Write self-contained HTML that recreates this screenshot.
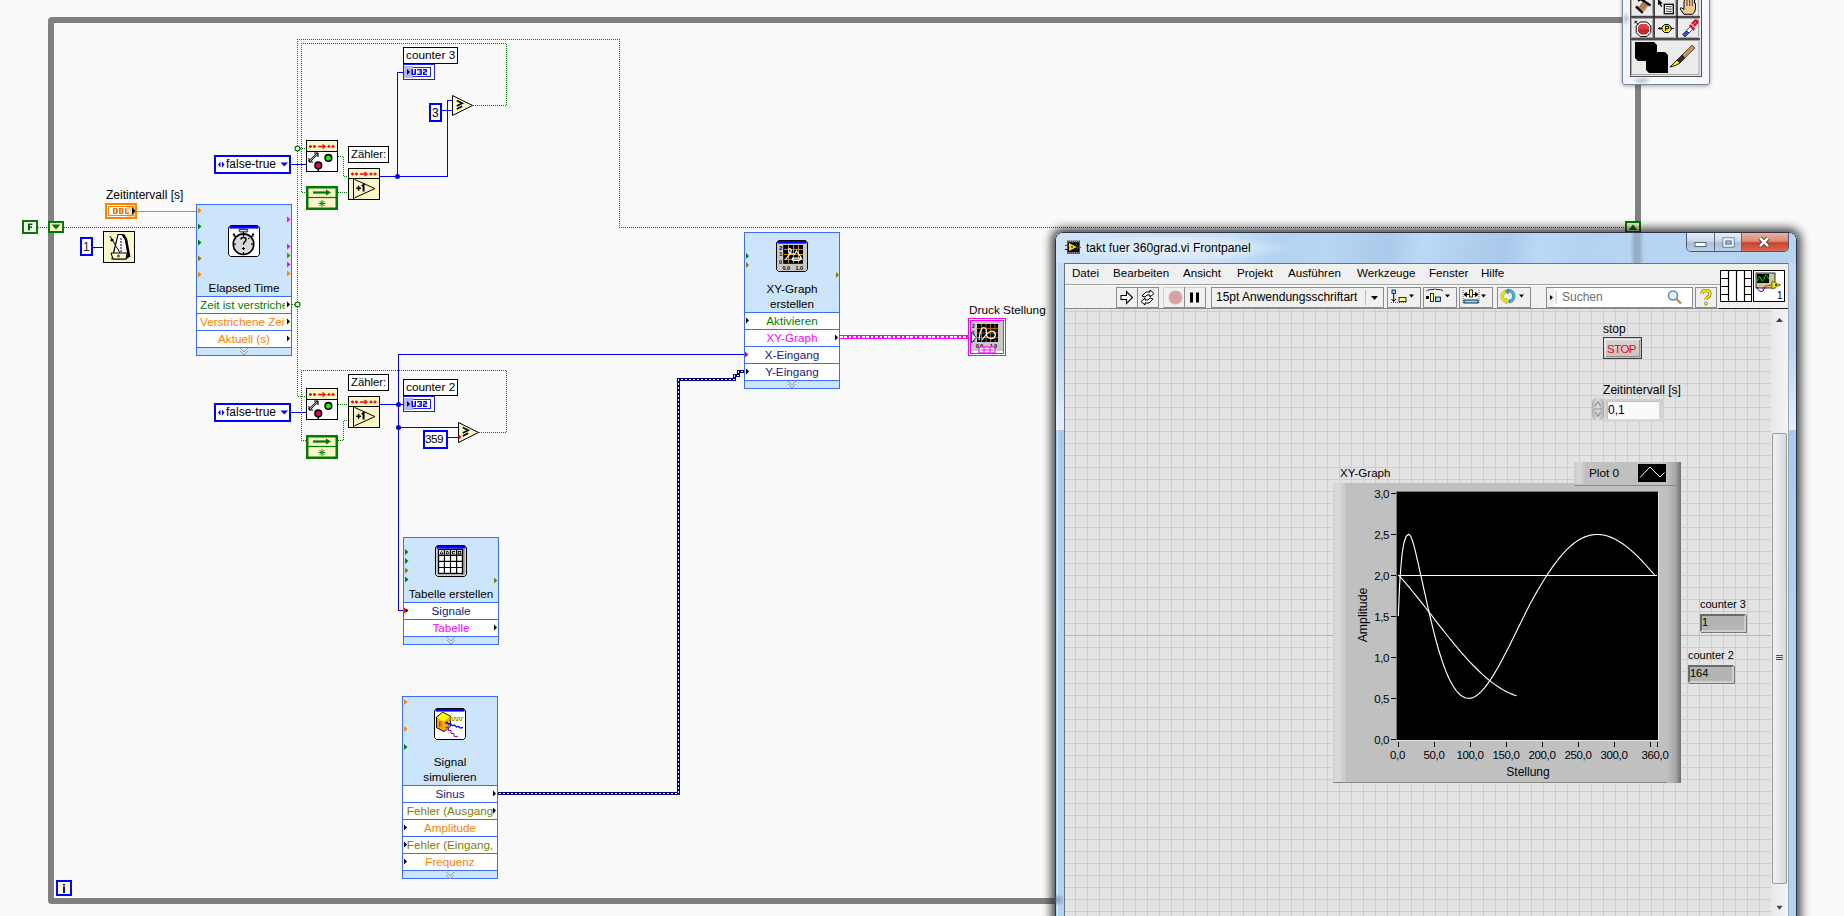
<!DOCTYPE html>
<html><head><meta charset="utf-8">
<style>
*{box-sizing:border-box}
html,body{margin:0;padding:0}
body{width:1844px;height:916px;overflow:hidden;position:relative;background:#fafafa;font-family:"Liberation Sans",sans-serif;color:#000}
.a{position:absolute}
.loop{left:48px;top:17px;width:1593px;height:887px;border:6px solid #808080;border-radius:4px}
.lbl{position:absolute;font-size:12px;line-height:14px;white-space:nowrap}
.box{position:absolute;background:#fff;border:1px solid #000;font-size:12px;line-height:14px;white-space:nowrap;padding:0 2px}
.xb{position:absolute;background:#cce5fb;border:1px solid #3c6cff}
.xb .t{position:absolute;left:0;right:0;text-align:center;font-size:11.7px;line-height:15px;color:#000}
.row{position:absolute;left:0;right:0;height:17px;background:#fff;border-top:1px solid #3c6cff;font-size:11.7px;line-height:15px;text-align:center;white-space:nowrap;overflow:hidden}
.chev{position:absolute;left:0;right:0;height:8px;border-top:1px solid #3c6cff;background:#cce5fb}
svg{position:absolute;overflow:visible}
</style></head>
<body>
<div class="a loop"></div>
<svg class="a" style="left:0;top:0" width="1844" height="916" viewBox="0 0 1844 916">
<g fill="none" stroke="#008000" stroke-width="1" stroke-dasharray="1 1" shape-rendering="crispEdges">
<path d="M38 227.5H48M64 227.5H196"/>
<path d="M297.5 304V39.5H619.5V227.5H1625"/>
<path d="M297.5 148.5H306"/>
<path d="M290 304.5H297.5V396.5H306"/>
<path d="M473 105.5H506.5V43.5H301.5V192.5H306"/>
<path d="M338 156.5H343.5V176.5H348M338 192.5H348"/>
<path d="M479 432.5H506.5V370.5H301.5V440.5H306"/>
<path d="M338 404.5H348M338 440.5H343.5V420.5H348"/>
</g>
<g fill="none" stroke="#0000ff" stroke-width="1" shape-rendering="crispEdges">
<path d="M93 247.5H103"/>
<path d="M291 164.5H306"/>
<path d="M380 176.5H447.5V100.5H452M397.5 176.5V72.5H403"/>
<path d="M442 110.5H452"/>
<path d="M291 412.5H306"/>
<path d="M380 404.5H403M744 354.5H398.5V610.5H403M398.5 427.5H458"/>
<path d="M447 437.5H458"/>
</g>
<g fill="#0000ff"><circle cx="397.5" cy="176.5" r="2.5"/><circle cx="398.5" cy="404.5" r="2.5"/><circle cx="398.5" cy="427.5" r="2.5"/></g>
<g fill="#fafafa" stroke="#008000" stroke-width="1.2"><circle cx="297.5" cy="148.5" r="2.4"/><circle cx="297.5" cy="304.5" r="2.4"/></g>
<path d="M137 211.5H196" stroke="#ff8000" stroke-width="1" fill="none" shape-rendering="crispEdges"/>
<g fill="none" shape-rendering="crispEdges">
<path d="M498 793.5H678.5V379.5H734.5V375.5H738.5V371.5H744" stroke="#000080" stroke-width="3" stroke-linejoin="miter" stroke-linecap="square"/>
<path d="M499 793.5H678.5V379.5H734.5V375.5H738.5V371.5H743" stroke="#fff" stroke-width="1" stroke-dasharray="2 2"/>
<path d="M840 337H968" stroke="#ff00ff" stroke-width="4"/>
<path d="M840 337H968" stroke="#fff" stroke-width="1.6" stroke-dasharray="2.6 1.8"/>
</g>
</svg>
<!-- F const & shift register -->
<div class="a" style="left:22px;top:220px;width:16px;height:14px;border:2px solid #007a00;background:#fff"></div>
<svg style="left:22px;top:220px" width="16" height="14"><path d="M6 3.5H10.5V5H8V6.5H10V8H8V10.5H6Z" fill="#006600"/></svg>
<div class="a" style="left:48px;top:221px;width:16px;height:12px;border:2px solid #007a00;background:#fbf6c8"></div>
<svg style="left:48px;top:221px" width="16" height="12"><path d="M3.5 3.5H12.5L8 8.5Z" fill="#007a00"/></svg>
<div class="a" style="left:1625px;top:221px;width:16px;height:12px;border:2px solid #007a00;background:#fbf6c8"></div>
<svg style="left:1625px;top:221px" width="16" height="12"><path d="M3.5 9H12.5L8 3.5Z" fill="#007a00"/></svg>
<!-- iteration terminal -->
<div class="a" style="left:56px;top:880px;width:16px;height:16px;border:2px solid #0000ff;background:#fffccc"></div>
<svg style="left:56px;top:880px" width="16" height="16"><rect x="7" y="4" width="2" height="1.5" fill="#0000ff"/><rect x="7" y="6.5" width="2" height="6.5" fill="#0000ff"/></svg>
<!-- DBL control -->
<div class="lbl" style="left:106px;top:188px;font-size:12px">Zeitintervall [s]</div>
<div class="a" style="left:105px;top:203px;width:32px;height:16px;border:2px solid #ff7f00;background:#fff"></div>
<div class="a" style="left:127px;top:205px;width:8px;height:12px;background:#ffd6ac"></div>
<div class="a" style="left:108px;top:206px;width:26px;height:10px;border:1px solid #ff7f00"></div>
<svg style="left:105px;top:203px" width="32" height="16"><g fill="#ff7000"><path d="M8 5H11.5L13 6.5V9.5L11.5 11H8ZM9.5 6.3V9.7H11V6.3Z"/><path d="M14 5H17.5L18.7 6V7.3L18 8L18.7 8.7V10L17.5 11H14ZM15.5 6.3V7.5H17V6.3ZM15.5 8.5V9.7H17V8.5Z"/><path d="M20 5H21.5V9.7H24V11H20Z"/></g><path d="M27 4L30.5 8L27 12Z" fill="#000"/></svg>
<!-- const 1 and wait -->
<div class="a" style="left:80px;top:237px;width:13px;height:19px;border:2px solid #0000ff;background:#fff"></div>
<div class="lbl" style="left:83px;top:240px;font-size:12px;color:#3a1a1a">1</div>
<div class="a" style="left:103px;top:231px;width:32px;height:32px;border:1px solid #000;background:#fbf7cc"></div>
<svg style="left:103px;top:231px" width="32" height="32"><path d="M9 28L11.5 18L15 3.5H19L22.5 8L25.5 25L23 28Z" fill="#fff" stroke="#000" stroke-width="1.2"/><path d="M20 3.5L23 8.5L26 25L23.5 26" fill="none" stroke="#000" stroke-width="2.5"/><path d="M7 5L17 22" stroke="#000" stroke-width="1"/><circle cx="9" cy="9" r="1.6" fill="#000"/><path d="M17 8H19M17 11H19M17 14H19M17 17H19M17 20H19" stroke="#000" stroke-width="1"/><path d="M8 22H24L23 28H10Z" fill="#fbf7cc" stroke="#000" stroke-width="1"/><circle cx="15.5" cy="25" r="1" fill="none" stroke="#000" stroke-width="0.8"/></svg>
<!-- Elapsed Time -->
<div class="xb" style="left:196px;top:204px;width:96px;height:152px">
 <div class="t" style="top:75px">Elapsed Time</div>
 <div class="row" style="top:91px;color:#008000;text-align:left;padding-left:3px"><span style="display:inline-block;width:85px;overflow:hidden;vertical-align:top">Zeit ist verstriche</span></div>
 <div class="row" style="top:108px;color:#ff7f00;text-align:left;padding-left:3px"><span style="display:inline-block;width:85px;overflow:hidden;vertical-align:top">Verstrichene Zeit</span></div>
 <div class="row" style="top:125px;color:#ff7f00">Aktuell (s)</div>
 <div class="chev" style="top:142px"></div>
</div>
<svg style="left:196px;top:204px" width="96" height="152">
<g fill="#ff8000"><path d="M2 3.5V9.5L5.5 6.5Z"/><path d="M2 67.5V73.5L5.5 70.5Z"/><path d="M91 66.5V72.5L94.5 69.5Z"/></g>
<g fill="#008000"><path d="M2 19.5V25.5L5.5 22.5Z"/><path d="M2 35.5V41.5L5.5 38.5Z"/></g>
<g fill="#808000"><path d="M2 51.5V57.5L5.5 54.5Z"/><path d="M91 48.5V54.5L94.5 51.5Z"/></g>
<g fill="#ff00ff"><path d="M91 12.5V18.5L94.5 15.5Z"/><path d="M91 39.5V45.5L94.5 42.5Z"/><path d="M91 57.5V63.5L94.5 60.5Z"/></g>
<g fill="#000"><path d="M91 97.5V103.5L94 100.5Z"/><path d="M91 114.5V120.5L94 117.5Z"/><path d="M91 131.5V137.5L94 134.5Z"/></g>
<path d="M44 144L48 148L52 144M44 147L48 151L52 147" stroke="#9a9a9a" fill="none" stroke-width="1"/>
<g transform="translate(32,21)"><path d="M2.5 0.5H29.5L31.5 2.5V29.5L29.5 31.5H2.5L0.5 29.5V2.5Z" fill="#fff" stroke="#000"/><rect x="1.5" y="1" width="29" height="2.6" fill="#0000ff"/><circle cx="15.5" cy="19.2" r="10.3" fill="#d9d9d9" stroke="#000" stroke-width="1.6"/><rect x="11.3" y="4.3" width="8.4" height="2.6" rx="0.5" fill="#d9d9d9" stroke="#000" stroke-width="0.9"/><path d="M15.5 7V9" stroke="#000" stroke-width="1.2"/><path d="M5 9L8 12M6.5 8.5L5.5 11.5M26 9L23 12M24.5 8.5L25.5 11.5" stroke="#000" stroke-width="1.4"/><path d="M15.5 9V11.5M15.5 27V29.5M5.2 19.2H8M23 19.2H25.8" stroke="#000" stroke-width="1.2"/><path d="M13 14.5Q13 12.5 15.5 12.5Q18 12.5 18 14.5Q18 16 16.5 17Q15.5 17.8 15.5 19.5" fill="none" stroke="#000" stroke-width="1.5"/><path d="M15.5 22V25M14 23.5H17" stroke="#000" stroke-width="1.1"/><circle cx="20.8" cy="13.5" r="0.7" fill="#000"/></g>
</svg>
<!-- enum 1 -->
<div class="a" style="left:214px;top:155px;width:77px;height:19px;border:2px solid #0000ff;background:#fff"></div>
<svg style="left:214px;top:155px" width="77" height="19"><path d="M6.5 6.5L4 9.5L6.5 12.5ZM8 6.5L10.5 9.5L8 12.5Z" fill="#0000ff"/><path d="M66.5 7.5H74L70.25 11.5Z" fill="#0000ff"/></svg>
<div class="lbl" style="left:226px;top:157px;font-size:12px;line-height:15px">false-true</div>
<!-- enum 2 -->
<div class="a" style="left:214px;top:403px;width:77px;height:19px;border:2px solid #0000ff;background:#fff"></div>
<svg style="left:214px;top:403px" width="77" height="19"><path d="M6.5 6.5L4 9.5L6.5 12.5ZM8 6.5L10.5 9.5L8 12.5Z" fill="#0000ff"/><path d="M66.5 7.5H74L70.25 11.5Z" fill="#0000ff"/></svg>
<div class="lbl" style="left:226px;top:405px;font-size:12px;line-height:15px">false-true</div>
<!-- first-call / counter groups -->
<svg style="left:0;top:0" width="1" height="1">
<defs>
<g id="fc"><rect x="0.5" y="0.5" width="31" height="31" fill="#fff" stroke="#000"/><rect x="1" y="1" width="30" height="10" fill="#fbf6c8"/><path d="M1 11.5H31" stroke="#000"/><g fill="none" stroke="#ff0000" stroke-width="1.3"><path d="M3 6.5H6M4.5 5V8M7 6.5H10M8.5 5V8M12 6.5H18.5"/><path d="M16.5 4.5L19 6.5L16.5 8.5"/><path d="M21.5 6.5H24.5M23 5V8M25.5 6.5H28.5M27 5V8"/></g><path d="M3.5 21.5L11.5 13.5" stroke="#000" stroke-width="2.2"/><path d="M3.5 21.5L11.5 13.5" stroke="#fff" stroke-width="0.7"/><path d="M3 22V18M3 22H7M12 13H8M12 13V17" stroke="#000" stroke-width="1.1" fill="none"/><circle cx="22.4" cy="17.9" r="3.3" fill="#22ee00" stroke="#000" stroke-width="1.6"/><circle cx="12.3" cy="25.4" r="3.3" fill="#f0005a" stroke="#000" stroke-width="1.6"/><path d="M12.3 29V31" stroke="#000" stroke-width="1.5"/></g>
<g id="cnt"><rect x="0.5" y="0.5" width="31" height="31" fill="#fbf6c8" stroke="#000"/><path d="M1 10.5H31" stroke="#000"/><g fill="none" stroke="#ff0000" stroke-width="1.3"><path d="M3 6H6M4.5 4.5V7.5M7 6H10M8.5 4.5V7.5M12 6H18.5"/><path d="M16.5 4L19 6L16.5 8"/><path d="M21.5 6H24.5M23 4.5V7.5M25.5 6H28.5M27 4.5V7.5"/></g><path d="M5.5 11V31.5" stroke="#000"/><path d="M6.5 11.4L26.9 20.6L6.5 29.8" fill="none" stroke="#000" stroke-width="1"/><path d="M8.2 20.3H13M10.6 17.8V22.8" stroke="#000" stroke-width="1.5"/><path d="M13.8 18.2L15.6 17V23.6" stroke="#000" stroke-width="2" fill="none"/></g>
<g id="init"><rect x="1.25" y="1.25" width="29.5" height="21.5" fill="#fbf6c8" stroke="#007a00" stroke-width="2.5"/><path d="M2 11.5H30" stroke="#007a00" stroke-width="1.2"/><path d="M7 6.5H21" stroke="#007a00" stroke-width="2.2"/><path d="M20 3.5L25 6.5L20 9.5Z" fill="#007a00"/><path d="M16 14V21M12.5 17.5H19.5M13.5 15L18.5 20M18.5 15L13.5 20" stroke="#007a00" stroke-width="0.9"/></g>
<g id="cmp"><path d="M0.5 0.5L20.5 10.5L0.5 20.5Z" fill="#fbf6c8" stroke="#000"/><path d="M4.8 5.6L10.2 8.3L4.8 11" fill="none" stroke="#000" stroke-width="1.7"/><path d="M4.8 13.9L10.2 11.2" stroke="#000" stroke-width="1.7"/></g>
</defs>
</svg>
<svg style="left:306px;top:140px" width="32" height="32"><use href="#fc"/></svg>
<svg style="left:306px;top:388px" width="32" height="32"><use href="#fc"/></svg>
<svg style="left:348px;top:168px" width="32" height="32"><use href="#cnt"/></svg>
<svg style="left:348px;top:396px" width="32" height="32"><use href="#cnt"/></svg>
<svg style="left:306px;top:186px" width="32" height="24"><use href="#init"/></svg>
<svg style="left:306px;top:435px" width="32" height="24"><use href="#init"/></svg>
<svg style="left:452px;top:95px" width="22" height="22"><use href="#cmp"/></svg>
<svg style="left:458px;top:422px" width="22" height="22"><use href="#cmp"/><path d="M0.5 12.3V17.7L3.5 15Z" fill="#ff0000"/></svg>
<div class="box" style="left:348px;top:146px;width:41px;height:17px;line-height:15px;font-size:11.3px;padding:0 0 0 2px">Zähler:</div>
<div class="box" style="left:348px;top:374px;width:41px;height:17px;line-height:15px;font-size:11.3px;padding:0 0 0 2px">Zähler:</div>
<div class="box" style="left:403px;top:47px;width:55px;height:17px;line-height:15px;font-size:11.8px;padding:0 0 0 2px">counter 3</div>
<div class="box" style="left:403px;top:379px;width:55px;height:17px;line-height:15px;font-size:11.8px;padding:0 0 0 2px">counter 2</div>
<!-- U32 indicators -->
<div class="a" style="left:403px;top:64px;width:32px;height:16px;border:1px solid #1f1fff;background:#fff"></div>
<div class="a" style="left:406px;top:67px;width:25px;height:10px;border:1px solid #1f1fff"></div>
<div class="a" style="left:404px;top:66px;width:9px;height:12px;background:#b4b4ff"></div>
<svg style="left:406px;top:67px" width="26" height="10"><path d="M1 2L4 5L1 8Z" fill="#000"/><g fill="#0000ff"><path d="M5.5 2H7V6.7H8.5V2H10V7.2L9.3 8H6.2L5.5 7.2Z"/><path d="M11 2.7L11.7 2H15.3L16 2.7V4.3L15.5 5L16 5.7V7.3L15.3 8H11.7L11 7.3V6.6H12.5V6.8H14.5V5.6H13V4.4H14.5V3.2H12.5V3.4H11Z"/><path d="M17 2.7L17.7 2H20.3L21 2.7V4.8L20.2 5.6H18.5V6.7H21V8H17V5.2L17.8 4.4H19.5V3.2H18.5V3.5H17Z"/></g></svg>
<div class="a" style="left:403px;top:396px;width:32px;height:16px;border:1px solid #1f1fff;background:#fff"></div>
<div class="a" style="left:406px;top:399px;width:25px;height:10px;border:1px solid #1f1fff"></div>
<div class="a" style="left:404px;top:398px;width:9px;height:12px;background:#b4b4ff"></div>
<svg style="left:406px;top:399px" width="26" height="10"><path d="M1 2L4 5L1 8Z" fill="#000"/><g fill="#0000ff"><path d="M5.5 2H7V6.7H8.5V2H10V7.2L9.3 8H6.2L5.5 7.2Z"/><path d="M11 2.7L11.7 2H15.3L16 2.7V4.3L15.5 5L16 5.7V7.3L15.3 8H11.7L11 7.3V6.6H12.5V6.8H14.5V5.6H13V4.4H14.5V3.2H12.5V3.4H11Z"/><path d="M17 2.7L17.7 2H20.3L21 2.7V4.8L20.2 5.6H18.5V6.7H21V8H17V5.2L17.8 4.4H19.5V3.2H18.5V3.5H17Z"/></g></svg>
<!-- numeric constants -->
<div class="a" style="left:429px;top:103px;width:13px;height:19px;border:2px solid #0000ff;background:#fff"></div>
<div class="lbl" style="left:432px;top:106px;font-size:12px">3</div>
<div class="a" style="left:423px;top:430px;width:25px;height:19px;border:2px solid #0000ff;background:#fff"></div>
<div class="lbl" style="left:425px;top:432px;font-size:11.8px;letter-spacing:-0.6px">359</div>
<!-- XY graph express -->
<svg style="left:0;top:0" width="1" height="1"><defs>
<g id="xyic"><path d="M2.5 0.5H29.5L31.5 2.5V29.5L29.5 31.5H2.5L0.5 29.5V2.5Z" fill="#c8c8c8" stroke="#000"/><rect x="1.5" y="1" width="29" height="2.6" fill="#0000ff"/><rect x="8" y="5" width="19" height="18" fill="#000"/><g stroke="#e0a000" stroke-width="0.9"><path d="M8 9.5H27M8 14.5H27M8 19.5H27M12.5 5V23M17.5 5V23M22.5 5V23"/></g><path d="M9.3 19.6L14 14L15.3 11Q14.5 7.8 12.8 8.8Q11.8 10.5 14 13.5L18.5 14.2L20.5 11L24.5 16.5Q26 19 23 20.5H18Q15.5 20 16.5 18.2H26" fill="none" stroke="#fff" stroke-width="1.2"/><path d="M7.5 5V23.5H27" stroke="#000" stroke-width="0.8" fill="none"/><g font-family="Liberation Sans" font-size="5.5" font-weight="bold" fill="#000"><text x="3.2" y="9.5">2</text><text x="3.2" y="16">1</text><text x="3" y="23.5">0</text><text x="6.5" y="29.5">0.0</text><text x="19.5" y="29.5">1.0</text></g></g>
</defs></svg>
<div class="xb" style="left:744px;top:232px;width:96px;height:157px">
 <div class="t" style="top:48px;line-height:15px">XY-Graph<br>erstellen</div>
 <div class="row" style="top:79px;color:#008000">Aktivieren</div>
 <div class="row" style="top:96px;color:#ff00ff">XY-Graph</div>
 <div class="row" style="top:113px;color:#1a1a80">X-Eingang</div>
 <div class="row" style="top:130px;color:#1a1a80">Y-Eingang</div>
 <div class="chev" style="top:147px"></div>
</div>
<svg style="left:744px;top:232px" width="96" height="157">
<g fill="#008000"><path d="M2 21V27L5 24Z"/></g><g fill="#808000"><path d="M2 30V36L5 33Z"/><path d="M92 40V46L95 43Z"/></g>
<g fill="#000"><path d="M2 85.5V91.5L5 88.5Z"/><path d="M91 102.5V108.5L94 105.5Z"/><path d="M2 136.5V142.5L5 139.5Z"/></g>
<path d="M1 119.5V125.5L4.5 122.5Z" fill="#ff0000"/>
<path d="M44 149L48 153L52 149M44 152L48 156L52 152" stroke="#9a9a9a" fill="none" stroke-width="1"/>
<g transform="translate(32,8)"><use href="#xyic"/></g>
</svg>
<!-- Druck Stellung -->
<div class="lbl" style="left:969px;top:303px;font-size:11.8px">Druck Stellung</div>
<div class="a" style="left:968px;top:318px;width:38px;height:38px;border:1px solid #ff00ff;background:#fff"></div>
<div class="a" style="left:970px;top:320px;width:34px;height:34px;border:1px solid #ff00ff"></div>
<svg style="left:971px;top:321px" width="32" height="32"><rect x="0" y="0" width="32" height="30" fill="#c8c8c8"/><rect x="6" y="3" width="21" height="18" fill="#000"/><g stroke="#c08000" stroke-width="0.8"><path d="M6 7.5H27M6 12H27M6 16.5H27M10.5 3V21M15 3V21M19.5 3V21M24 3V21"/></g><path d="M8 19C9 8 12 4 15 8C17 11 13 15 18 17C23 19 26 14 23 11C20 8 15 13 11 19" fill="none" stroke="#fff" stroke-width="1.2"/><g font-family="Liberation Sans" font-size="5" font-weight="bold" fill="#000"><text x="1" y="7">2</text><text x="1" y="14">1</text><text x="1" y="21">0</text><text x="5" y="27">0.0</text><text x="19" y="27">1.0</text></g><path d="M0.5 11L5 16.5L0.5 22Z" fill="#fff" stroke="#000" stroke-width="0.8"/><rect x="8" y="26" width="16" height="6" fill="#fff" stroke="#ff00ff" stroke-width="1.2"/><path d="M10 29H22M13 26V32M19 26V32" stroke="#ff00ff" stroke-width="1"/></svg>
<!-- Tabelle erstellen -->
<div class="xb" style="left:403px;top:537px;width:96px;height:108px">
 <div class="t" style="top:48px">Tabelle erstellen</div>
 <div class="row" style="top:64px;color:#1a1a80">Signale</div>
 <div class="row" style="top:81px;color:#ff00ff">Tabelle</div>
 <div class="chev" style="top:98px"></div>
</div>
<svg style="left:403px;top:537px" width="96" height="108">
<g fill="#008000"><path d="M2 12V18L5.5 15Z"/><path d="M2 21V27L5.5 24Z"/><path d="M2 39.5V45.5L5.5 42.5Z"/></g><g fill="#808000"><path d="M2 30.5V36.5L5.5 33.5Z"/><path d="M91 40.5V46.5L94.5 43.5Z"/></g>
<path d="M1 70.5V76.5L4.5 73.5Z" fill="#ff0000"/><path d="M3 71.5V75.5L5.5 73.5Z" fill="#000"/>
<path d="M91 87.5V93.5L94 90.5Z" fill="#000"/>
<path d="M44 100L48 104L52 100M44 103L48 107L52 103" stroke="#9a9a9a" fill="none" stroke-width="1"/>
<g transform="translate(32,8)"><path d="M2.5 0.5H29.5L31.5 2.5V29.5L29.5 31.5H2.5L0.5 29.5V2.5Z" fill="#d4d4d4" stroke="#000"/><rect x="1.5" y="1" width="29" height="2.6" fill="#0000ff"/><rect x="26" y="4" width="4" height="26" fill="#a8a8a8"/><rect x="3.5" y="4.5" width="24" height="24" fill="#fff" stroke="#000" stroke-width="1.4"/><rect x="4" y="5" width="23" height="5" fill="#d8d8d8"/><path d="M3.5 10.3H27.5M3.5 16.4H27.5M3.5 22.5H27.5M9.4 4.5V28.5M15.5 4.5V28.5M21.6 4.5V28.5" stroke="#000" stroke-width="1.2"/><g fill="none" stroke="#000" stroke-width="0.9"><path d="M5.5 9V7.5L6.5 6.5L7.5 7.5V9Z"/><path d="M11.5 6.5V9H13L14 7.75L13 6.5Z"/><path d="M20 6.5H17.5V9H20"/><rect x="23.3" y="6.5" width="2.5" height="2.5"/></g></g>
</svg>
<!-- Signal simulieren -->
<div class="xb" style="left:402px;top:696px;width:96px;height:183px">
 <div class="t" style="top:57px;line-height:15px">Signal<br>simulieren</div>
 <div class="row" style="top:88px;color:#1a1a80">Sinus</div>
 <div class="row" style="top:105px;color:#808000">Fehler (Ausgang</div>
 <div class="row" style="top:122px;color:#ff7f00">Amplitude</div>
 <div class="row" style="top:139px;color:#808000">Fehler (Eingang,</div>
 <div class="row" style="top:156px;color:#ff7f00">Frequenz</div>
 <div class="chev" style="top:173px"></div>
</div>
<svg style="left:402px;top:696px" width="96" height="183">
<g fill="#ff8000"><path d="M2 3V9L5.5 6Z"/><path d="M2 30V36L5.5 33Z"/></g><g fill="#008000"><path d="M2 48V54L5.5 51Z"/></g>
<g fill="#000"><path d="M91 94.5V100.5L94 97.5Z"/><path d="M91 111.5V117.5L94 114.5Z"/><path d="M2 128.5V134.5L5 131.5Z"/><path d="M2 145.5V151.5L5 148.5Z"/><path d="M2 162.5V168.5L5 165.5Z"/></g>
<path d="M44 176L48 180L52 176M44 179L48 183L52 179" stroke="#9a9a9a" fill="none" stroke-width="1"/>
<g transform="translate(32,12)"><path d="M2.5 0.5H29.5L31.5 2.5V29.5L29.5 31.5H2.5L0.5 29.5V2.5Z" fill="#fff" stroke="#000"/><rect x="1.5" y="1" width="29" height="2.6" fill="#0000ff"/><path d="M2.5 9L8.7 4.3L16.5 8.2V18.7L10 23.5L2.5 19.6Z" fill="#ffa500" stroke="#000" stroke-width="1"/><path d="M3 9.5L8.7 4.8L16 8.5L9.5 13.5Z" fill="#ffff00"/><path d="M13.5 18L16.5 16V19L11 23Z" fill="#909090"/><path d="M5.5 13.5V19M5.5 14H8M5.5 16H8M5.5 18H8" stroke="#a05000" stroke-width="0.9"/><path d="M14.8 12.6H16.3V9.4H18.2V12.6H20.1V9.4H22V12.6H23.9V9.4H25.8V12.6H27.7V9.4H29.5" fill="none" stroke="#a0a000" stroke-width="1"/><path d="M11.3 15.5L13 14.3L14.5 16.2L16.5 15.5L18.5 17.8L20.5 17L22.5 19L24.5 18.5L26.5 20L29 19.3" fill="none" stroke="#0000ff" stroke-width="1.2"/><path d="M11.3 19.6H14.5V22.5H17V25.5H20V28.4H24" fill="none" stroke="#a000a0" stroke-width="1"/></g>
</svg>
<!-- ===== Front panel window ===== -->
<div class="a" style="left:1055px;top:232px;width:742px;height:720px;border-radius:8px 8px 0 0;box-shadow:0 0 10px 4px rgba(0,0,0,0.72)"></div>
<div class="a" id="win" style="left:1055px;top:232px;width:742px;height:700px;border:1px solid #2b3440;border-radius:8px 8px 0 0;background:linear-gradient(180deg,#c9e0f7 0px,#bcd7f2 30px,#b9d5f3 100%);overflow:hidden">
 <div class="a" style="left:0;top:0;width:740px;height:30px;background:linear-gradient(100deg,#d0e4f8 0px,#c8dff7 170px,#b4d2f1 215px,#b8d5f3 270px,#aacaeb 330px,#bcd9f6 362px,#b0cfef 410px,#a9c9ea 445px,#bbd8f5 478px,#b4d3f2 520px,#b7d5f3 600px,#b6d4f2 740px)"></div>
 <div class="a" style="left:10px;top:2px;width:220px;height:26px;border-radius:50%;background:radial-gradient(ellipse at center,rgba(240,248,255,0.75) 0%,rgba(240,248,255,0.4) 50%,rgba(240,248,255,0) 75%)"></div>
</div>
<div class="a" style="left:1056px;top:263px;width:8px;height:167px;background:linear-gradient(180deg,#c2daf3 0%,#bcd6f2 50%,#e6f0fa 100%)"></div>
<div class="a" style="left:1056px;top:430px;width:8px;height:490px;background:linear-gradient(180deg,#a8caee 0%,#b3d3f5 40%,#b3d3f5 100%)"></div>
<div class="a" style="left:1789px;top:263px;width:7px;height:167px;background:linear-gradient(180deg,#c2daf3 0%,#bcd6f2 50%,#e6f0fa 100%)"></div>
<div class="a" style="left:1789px;top:430px;width:7px;height:490px;background:linear-gradient(180deg,#a8caee 0%,#b3d3f5 40%,#b3d3f5 100%)"></div>
<div class="a" style="left:1057px;top:263px;width:1px;height:660px;background:rgba(255,255,255,0.6)"></div>
<!-- loop border seen through glass -->
<div class="a" style="left:1630px;top:233px;width:14px;height:30px;background:linear-gradient(90deg,rgba(120,140,160,0) 0%,rgba(120,140,160,0.55) 35%,rgba(120,140,160,0.55) 65%,rgba(120,140,160,0) 100%)"></div>
<div class="a" style="left:1049px;top:893px;width:16px;height:14px;background:radial-gradient(ellipse at center,rgba(90,110,130,0.6) 0%,rgba(90,110,130,0) 70%)"></div>
<!-- title -->
<svg style="left:1065px;top:240px" width="17" height="14"><rect x="2" y="0.5" width="13" height="13.5" fill="#505050"/><rect x="3" y="2.5" width="11" height="9.5" fill="#000"/><path d="M3 1.3H14M3 12.9H14" stroke="#c8c8c8" stroke-width="0.8" stroke-dasharray="1 1"/><path d="M4 3L12 7L4 11Z" fill="#ffd800"/><path d="M11 3.5L13 6M11 10.5L13 8" stroke="#00a000" stroke-width="0.8"/><circle cx="7" cy="7" r="1" fill="#404040"/><path d="M0 5.4H4" stroke="#ff0000" stroke-width="1.1"/><path d="M0 9.5H4" stroke="#0000ff" stroke-width="1.1"/><path d="M12 7.4H16" stroke="#ff0000" stroke-width="1.1"/></svg>
<div class="lbl" style="left:1086px;top:241px;font-size:12.1px;line-height:15px;color:#000">takt fuer 360grad.vi Frontpanel</div>
<!-- caption buttons -->
<div class="a" style="left:1686px;top:233px;width:103px;height:19px;border:1px solid #4a5a6e;border-top:none;border-radius:0 0 5px 5px;overflow:hidden">
 <div class="a" style="left:0;top:0;width:28px;height:18px;background:linear-gradient(180deg,#e4eef8 0%,#c9daec 45%,#a9bfd8 55%,#bcd0e6 100%);border-right:1px solid #5a6a80"></div>
 <div class="a" style="left:28px;top:0;width:27px;height:18px;background:linear-gradient(180deg,#e4eef8 0%,#c9daec 45%,#a9bfd8 55%,#bcd0e6 100%);border-right:1px solid #5a6a80"></div>
 <div class="a" style="left:55px;top:0;width:47px;height:18px;background:linear-gradient(180deg,#eab0a4 0%,#de8a78 45%,#c8442c 55%,#d86a50 100%)"></div>
</div>
<svg style="left:1686px;top:233px" width="103" height="19">
<rect x="9" y="9.5" width="11" height="4" fill="#fff" stroke="#3a4a5e" stroke-width="0.8"/>
<rect x="37" y="5" width="11" height="9" fill="none" stroke="#3a4a5e" stroke-width="0.8"/><rect x="38" y="6" width="9" height="7" fill="none" stroke="#fff" stroke-width="1.2"/><rect x="40" y="8" width="5" height="3" fill="#a9bfd8" stroke="#3a4a5e" stroke-width="0.6"/>
<path d="M74 5L82 13M82 5L74 13" stroke="#3a2020" stroke-width="4.2"/><path d="M74 5L82 13M82 5L74 13" stroke="#fff" stroke-width="2.6"/>
</svg>
<!-- client area -->
<div class="a" style="left:1064px;top:263px;width:725px;height:660px;background:#f0f0f0;border-top:1px solid #6a7480;border-left:1px solid #6a7480;border-right:1px solid #9aa8b8"></div>
<div class="a" style="left:1065px;top:284px;width:655px;height:1px;background:#a0a0a0"></div>
<div class="a" style="left:1065px;top:285px;width:655px;height:1px;background:#fff"></div>
<!-- menu -->
<div class="lbl" style="left:1072px;top:265px;font-size:11.6px;line-height:16px">Datei</div>
<div class="lbl" style="left:1113px;top:265px;font-size:11.6px;line-height:16px">Bearbeiten</div>
<div class="lbl" style="left:1183px;top:265px;font-size:11.6px;line-height:16px">Ansicht</div>
<div class="lbl" style="left:1237px;top:265px;font-size:11.6px;line-height:16px">Projekt</div>
<div class="lbl" style="left:1288px;top:265px;font-size:11.6px;line-height:16px">Ausführen</div>
<div class="lbl" style="left:1357px;top:265px;font-size:11.6px;line-height:16px">Werkzeuge</div>
<div class="lbl" style="left:1429px;top:265px;font-size:11.6px;line-height:16px">Fenster</div>
<div class="lbl" style="left:1481px;top:265px;font-size:11.6px;line-height:16px">Hilfe</div>
<!-- toolbar -->
<div class="a" style="left:1065px;top:308px;width:706px;height:1px;background:#8a8a8a"></div>
<div class="a" style="left:1719px;top:308px;width:69px;height:1px;background:#222"></div>
<div class="a" style="left:1116px;top:287px;width:43px;height:21px;border:1px solid #8c8c8c;background:#f0f0f0"></div>
<div class="a" style="left:1137px;top:287px;width:1px;height:21px;background:#8c8c8c"></div>
<div class="a" style="left:1163px;top:287px;width:43px;height:21px;border:1px solid #8c8c8c;background:#f0f0f0;border-left-color:#d0d0d0;border-top-color:#d0d0d0"></div>
<div class="a" style="left:1184px;top:287px;width:1px;height:21px;background:#8c8c8c"></div>
<svg style="left:1116px;top:287px" width="90" height="21">
<path d="M5 8.5H10.5V4.5L16.5 10.5L10.5 16.5V12.5H5Z" fill="#fff" stroke="#000" stroke-width="1.1"/>
<g transform="translate(21,0)"><path d="M5 9L9 5H13V3L17 6.5L13 10V8H10L8 10Z" fill="#fff" stroke="#000" stroke-width="1"/><path d="M16 12L12 16H8V18L4 14.5L8 11V13H11L13 11Z" fill="#fff" stroke="#000" stroke-width="1"/></g>
<path d="M54.5 5.5L58 4H61L64.5 5.5L66 9V12L64.5 15.5L61 17H58L54.5 15.5L53 12V9Z" fill="#d9a0a4" stroke="#c8c8c8" stroke-width="1"/>
<rect x="74" y="5.5" width="3" height="10" fill="#000"/><rect x="80" y="5.5" width="3" height="10" fill="#000"/>
</svg>
<div class="a" style="left:1211px;top:287px;width:173px;height:21px;border:1px solid #8c8c8c;background:#f0f0f0"></div>
<div class="lbl" style="left:1216px;top:290px;font-size:12px;line-height:15px">15pt Anwendungsschriftart</div>
<div class="a" style="left:1365px;top:290px;width:1px;height:15px;background:#bbb"></div>
<svg style="left:1368px;top:287px" width="14" height="21"><path d="M3 9H10L6.5 13Z" fill="#000"/></svg>
<div class="a" style="left:1387px;top:287px;width:34px;height:21px;border:1px solid #8c8c8c;background:#f0f0f0"></div>
<div class="a" style="left:1423px;top:287px;width:34px;height:21px;border:1px solid #8c8c8c;background:#f0f0f0"></div>
<div class="a" style="left:1459px;top:287px;width:34px;height:21px;border:1px solid #8c8c8c;background:#f0f0f0"></div>
<div class="a" style="left:1497px;top:287px;width:34px;height:21px;border:1px solid #8c8c8c;background:#f0f0f0"></div>
<svg style="left:1387px;top:287px" width="146" height="21">
<g><rect x="5" y="3" width="3.5" height="3.5" fill="#80e0ff" stroke="#000" stroke-width="0.8"/><path d="M6.7 7V14M4.5 12L6.7 14.5L9 12" stroke="#000" stroke-width="1" fill="none"/><rect x="12" y="10.5" width="7" height="4" fill="#ffff80" stroke="#000" stroke-width="0.8"/><path d="M4 15.5H20" stroke="#000" stroke-width="0.6" stroke-dasharray="1 1"/><path d="M22 7.5H27L24.5 10.5Z" fill="#000"/></g>
<g transform="translate(36,0)"><path d="M3.5 4Q5 2.5 9 2.5H11L12 1.5L13 2.5H15Q19 2.5 20 4" fill="none" stroke="#000" stroke-width="0.8"/><rect x="3" y="9" width="3" height="3" fill="#000"/><rect x="7.5" y="6.5" width="3" height="8" fill="#ffff80" stroke="#000" stroke-width="0.8"/><rect x="12.5" y="10" width="5" height="4.5" fill="#80e0ff" stroke="#000" stroke-width="0.8"/><path d="M22 7.5H27L24.5 10.5Z" fill="#000"/></g>
<g transform="translate(72,0)"><path d="M4 3V16M20 3V16" stroke="#000" stroke-width="0.6" stroke-dasharray="1 1"/><path d="M5 7.5H19M5 7.5L7.5 5.5V9.5ZM19 7.5L16.5 5.5V9.5Z" stroke="#000" stroke-width="1"/><rect x="10.5" y="3" width="3" height="7" fill="#ffff80" stroke="#000" stroke-width="0.8"/><rect x="5" y="13" width="14" height="3" fill="#80e0ff" stroke="#000" stroke-width="0.8"/><path d="M22 7.5H27L24.5 10.5Z" fill="#000"/></g>
<g transform="translate(110,0)"><path d="M9 3Q3 5 4 11Q5 15 9 15V17L12 14L9 11V13Q6 12 6.5 9Q7 6 9 6Z" fill="#f0f000" stroke="#a0a000" stroke-width="0.6"/><path d="M11 2V5Q16 5 15.5 10Q15 13 12 13V16Q18 15 18 9Q18 3 11 2Z M11 2L8 4.5L11 7Z" fill="#40b8d8" stroke="#207090" stroke-width="0.6"/><path d="M22 7.5H27L24.5 10.5Z" fill="#000"/></g>
</svg>
<!-- search -->
<div class="a" style="left:1546px;top:287px;width:147px;height:21px;border:1px solid #8c8c8c;background:#fff"></div>
<div class="a" style="left:1547px;top:288px;width:7px;height:19px;background:#f0f0f0"></div>
<svg style="left:1546px;top:287px" width="147" height="21"><path d="M4 8L7 10.5L4 13Z" fill="#000"/><path d="M10 4V17" stroke="#c0c0c0"/><circle cx="127" cy="8.5" r="4.5" fill="#e8f4ff" stroke="#5a8ab0" stroke-width="1.5"/><path d="M130.5 12L135 16.5" stroke="#d08040" stroke-width="2.4"/></svg>
<div class="lbl" style="left:1562px;top:290px;font-size:12px;line-height:15px;color:#6d6d6d">Suchen</div>
<div class="a" style="left:1695px;top:287px;width:22px;height:21px;border:1px solid #8c8c8c;background:#f0f0f0"></div>
<svg style="left:1695px;top:287px" width="22" height="21"><path d="M7 7Q7 3.5 11 3.5Q15 3.5 15 7Q15 9 12.5 10.5Q11 11.5 11 13" fill="none" stroke="#806000" stroke-width="3.2"/><path d="M7 7Q7 3.5 11 3.5Q15 3.5 15 7Q15 9 12.5 10.5Q11 11.5 11 13" fill="none" stroke="#ffee00" stroke-width="2"/><circle cx="11" cy="16.5" r="1.6" fill="#ffee00" stroke="#806000" stroke-width="0.6"/></svg>
<!-- connector pane & icon -->
<div class="a" style="left:1720px;top:270px;width:32px;height:32px;border:1px solid #000;background:#fff"></div>
<svg style="left:1720px;top:270px" width="32" height="32"><path d="M8.5 1V31M16.5 1V31M24.5 1V31M1 8.5H8.5M1 16.5H8.5M1 24.5H8.5M24.5 8.5H31M24.5 16.5H31M24.5 24.5H31" stroke="#000" stroke-width="1.2"/></svg>
<div class="a" style="left:1753px;top:270px;width:32px;height:32px;border:1px solid #000;background:#fff"></div>
<svg style="left:1753px;top:270px" width="32" height="32"><rect x="3" y="3" width="19" height="15" fill="#c8c8a0" stroke="#000" stroke-width="0.8"/><rect x="4" y="4" width="12" height="9" fill="#000"/><path d="M4.5 11Q6 3 8 9Q10 14 12 6Q13.5 3 15.5 9" fill="none" stroke="#00e000" stroke-width="1"/><path d="M4 17Q6 23 10 21L12 17" fill="none" stroke="#0000c0" stroke-width="1"/><path d="M9 19Q12 15 18 15H28" fill="none" stroke="#ff0000" stroke-width="0.8"/><path d="M19 11L27 15L19 19Z" fill="#f0f000" stroke="#606000" stroke-width="0.8"/><path d="M22 15H24M23 14V16" stroke="#000"/><text x="24" y="29" font-size="10" font-family="Liberation Sans" fill="#000">1</text></svg>
<!-- panel grid -->
<div class="a" style="left:1065px;top:309px;width:706px;height:607px;background-color:#e3e3e3;background-image:linear-gradient(90deg,#cdcdcd 1px,transparent 1px),linear-gradient(180deg,#cdcdcd 1px,transparent 1px);background-size:12px 12px;background-position:10px 2px"></div>
<div class="a" style="left:1065px;top:635px;width:270px;height:1px;background:#b4b4b4"></div>
<div class="a" style="left:1681px;top:635px;width:90px;height:1px;background:#b4b4b4"></div>
<!-- scrollbar -->
<div class="a" style="left:1771px;top:309px;width:17px;height:607px;background:linear-gradient(90deg,#e8e8e8,#f4f4f4)"></div>
<div class="a" style="left:1772px;top:433px;width:15px;height:451px;border:1px solid #9a9a9a;border-radius:2px;background:linear-gradient(90deg,#f2f2f2 0%,#e6e6e6 50%,#d8d8d8 100%)"></div>
<svg style="left:1771px;top:309px" width="17" height="607"><path d="M5 13L8.5 9L12 13Z" fill="#404040"/><path d="M5.5 596.8L8.5 600.8L11.5 596.8Z" fill="#404040"/><path d="M5 346.5H12M5 348.5H12M5 350.5H12" stroke="#505050" stroke-width="1"/></svg>
<!-- stop button -->
<div class="lbl" style="left:1603px;top:322px;font-size:12px;line-height:14px">stop</div>
<div class="a" style="left:1603px;top:337px;width:39px;height:22px;border:1px solid #3c3c3c;background:linear-gradient(135deg,#e6e6e6 0%,#c8c8c8 40%,#b8b8b8 100%)"></div>
<div class="a" style="left:1605px;top:339px;width:35px;height:18px;background:linear-gradient(180deg,#d6d6d6,#c4c4c4);box-shadow:inset 1px 1px 0 #efefef,inset -1px -1px 0 #909090"></div>
<div class="lbl" style="left:1607px;top:341px;font-size:11.6px;line-height:15px;color:#ff0000;letter-spacing:-0.6px">STOP</div>
<!-- Zeitintervall numeric -->
<div class="lbl" style="left:1603px;top:383px;font-size:12.1px;line-height:14px">Zeitintervall [s]</div>
<div class="a" style="left:1592px;top:397px;width:12px;height:24px;border-radius:6px;background:linear-gradient(90deg,#b0b0b0,#e0e0e0 50%,#a8a8a8)"></div>
<svg style="left:1592px;top:397px" width="12" height="24"><path d="M3.5 9L6 4.5L8.5 9" fill="none" stroke="#707070" stroke-width="0.9"/><path d="M3.5 15L6 19.5L8.5 15" fill="none" stroke="#707070" stroke-width="0.9"/><path d="M2 12H10" stroke="#909090" stroke-width="0.8"/></svg>
<div class="a" style="left:1604px;top:399px;width:59px;height:23px;background:linear-gradient(180deg,#cfcfcf,#d8d8d8)"></div>
<div class="a" style="left:1607px;top:401px;width:52px;height:18px;background:#fafafa;box-shadow:inset 1px 1px 0 #c0c0c0"></div>
<div class="lbl" style="left:1608px;top:403px;font-size:12px;line-height:14px">0,1</div>
<!-- XY graph -->
<div class="lbl" style="left:1340px;top:466px;font-size:11.6px;line-height:14px">XY-Graph</div>
<div class="a" style="left:1333px;top:483px;width:348px;height:300px;background:#c0c0c0;box-shadow:inset 0 -1px 0 #8a8a8a"></div>
<div class="a" style="left:1333px;top:483px;width:13px;height:299px;background:linear-gradient(90deg,#d2d2d2,#dcdcdc 40%,#c6c6c6)"></div>
<div class="a" style="left:1667px;top:483px;width:14px;height:300px;background:linear-gradient(90deg,#c0c0c0 0%,#a8a8a8 60%,#6e6e6e 100%)"></div>
<div class="a" style="left:1574px;top:462px;width:107px;height:23px;background:#c0c0c0;box-shadow:0 1px 0 #8a8a8a"></div>
<div class="a" style="left:1574px;top:462px;width:13px;height:22px;background:linear-gradient(90deg,#c8c8c8,#d8d8d8 40%,#bcbcbc)"></div>
<div class="a" style="left:1667px;top:462px;width:14px;height:23px;background:linear-gradient(90deg,#c0c0c0 0%,#a8a8a8 60%,#6e6e6e 100%)"></div>
<div class="lbl" style="left:1589px;top:466px;font-size:11.8px;line-height:14px">Plot 0</div>
<svg style="left:1638px;top:464px" width="29" height="19"><rect x="0" y="0" width="28" height="18" fill="#000"/><path d="M2 13.5L12 3L22 13L26.5 8.5" fill="none" stroke="#fff" stroke-width="1"/></svg>
<svg style="left:1333px;top:483px" width="348" height="300">
<g transform="translate(-1333,-483)">
<rect x="1397" y="492" width="261" height="248" fill="#000"/>
<path d="M1396.5 740V491.5H1658" stroke="#7a7a7a" stroke-width="1" fill="none"/>
<path d="M1397 740.5H1658.5V492" stroke="#e8e8e8" stroke-width="1" fill="none"/>
<g stroke="#000" stroke-width="1.2" shape-rendering="crispEdges"><path d="M1391 493.5H1396M1391 534.5H1396M1391 575.5H1396M1391 616.5H1396M1391 657.5H1396M1391 698.5H1396M1391 739.5H1396"/><path d="M1398.5 742V747M1434.5 742V747M1470.5 742V747M1506.5 742V747M1542.5 742V747M1578.5 742V747M1614.5 742V747M1650.5 742V747M1657.5 742V747"/></g>
<g font-family="Liberation Sans" font-size="11.5" fill="#000" text-anchor="end" letter-spacing="-0.4"><text x="1389" y="497.5">3,0</text><text x="1389" y="538.5">2,5</text><text x="1389" y="579.5">2,0</text><text x="1389" y="620.5">1,5</text><text x="1389" y="661.5">1,0</text><text x="1389" y="702.5">0,5</text><text x="1389" y="743.5">0,0</text></g>
<g font-family="Liberation Sans" font-size="11.5" fill="#000" text-anchor="middle" letter-spacing="-0.4"><text x="1397.5" y="759">0,0</text><text x="1434" y="759">50,0</text><text x="1470" y="759">100,0</text><text x="1506" y="759">150,0</text><text x="1542" y="759">200,0</text><text x="1578" y="759">250,0</text><text x="1614" y="759">300,0</text><text x="1655" y="759">360,0</text></g>
<text x="1528" y="776" font-family="Liberation Sans" font-size="12" text-anchor="middle">Stellung</text>
<text transform="translate(1367,615) rotate(-90)" font-family="Liberation Sans" font-size="12.3" text-anchor="middle">Amplitude</text>
<g fill="none" stroke="#fff" stroke-width="1.15" stroke-linejoin="round">
<path d="M1398 575.5H1657"/>
<path d="M1398.3 616.1 L1398.8 604.0 L1399.6 585.0 L1400.8 568.0 L1402.2 553.0 L1404.0 542.5 L1406.2 536.2 L1408.6 534.2 L1409.3 534.7 L1410.6 536.2 L1411.8 538.9 L1413.0 542.5 L1414.3 546.9 L1415.5 551.8 L1416.7 557.1 L1418.0 562.5 L1419.2 568.1 L1420.4 573.6 L1421.7 579.1 L1422.9 584.6 L1424.1 590.1 L1425.4 595.7 L1426.6 601.3 L1427.8 606.8 L1429.1 612.2 L1430.3 617.5 L1431.5 622.7 L1432.8 627.8 L1434.0 632.7 L1435.2 637.5 L1436.5 642.1 L1437.7 646.5 L1438.9 650.8 L1440.2 654.8 L1441.4 658.7 L1442.6 662.4 L1443.9 665.8 L1445.1 669.1 L1446.3 672.2 L1447.6 675.2 L1448.8 677.9 L1450.0 680.4 L1451.3 682.8 L1452.5 685.0 L1453.7 687.0 L1455.0 688.8 L1456.2 690.5 L1457.4 692.0 L1458.7 693.3 L1459.9 694.5 L1461.1 695.5 L1462.4 696.3 L1463.6 697.0 L1464.8 697.6 L1466.1 698.0 L1467.3 698.2 L1468.5 698.3 L1469.8 698.3 L1471.0 698.1 L1472.2 697.7 L1473.5 697.3 L1474.7 696.7 L1475.9 695.9 L1477.2 695.1 L1478.4 694.1 L1479.6 693.0 L1480.9 691.9 L1482.1 690.6 L1483.3 689.2 L1484.6 687.8 L1485.8 686.2 L1487.0 684.6 L1488.3 682.9 L1489.5 681.1 L1490.7 679.3 L1492.0 677.4 L1493.2 675.4 L1494.5 673.4 L1495.7 671.3 L1496.9 669.2 L1498.2 667.0 L1499.4 664.8 L1500.6 662.5 L1501.9 660.3 L1503.1 657.9 L1504.3 655.6 L1505.6 653.2 L1506.8 650.8 L1508.0 648.4 L1509.3 645.9 L1510.5 643.5 L1511.7 641.0 L1513.0 638.5 L1514.2 636.0 L1515.4 633.5 L1516.7 631.0 L1517.9 628.5 L1519.1 626.0 L1520.4 623.4 L1521.6 620.9 L1522.8 618.4 L1524.1 615.9 L1525.3 613.4 L1526.5 610.9 L1527.8 608.5 L1529.0 606.1 L1530.2 603.8 L1531.5 601.5 L1532.7 599.2 L1533.9 597.0 L1535.2 594.8 L1536.4 592.6 L1537.6 590.5 L1538.9 588.4 L1540.1 586.3 L1541.3 584.2 L1542.6 582.2 L1543.8 580.2 L1545.0 578.3 L1546.3 576.3 L1547.5 574.4 L1548.7 572.5 L1550.0 570.7 L1551.2 568.9 L1552.4 567.1 L1553.7 565.4 L1554.9 563.7 L1556.1 562.1 L1557.4 560.5 L1558.6 558.9 L1559.8 557.4 L1561.1 555.9 L1562.3 554.5 L1563.5 553.1 L1564.8 551.7 L1566.0 550.4 L1567.2 549.2 L1568.5 548.0 L1569.7 546.9 L1570.9 545.8 L1572.2 544.7 L1573.4 543.7 L1574.6 542.8 L1575.9 541.9 L1577.1 541.0 L1578.3 540.3 L1579.6 539.5 L1580.8 538.8 L1582.0 538.2 L1583.3 537.6 L1584.5 537.1 L1585.7 536.6 L1587.0 536.1 L1588.2 535.8 L1589.5 535.4 L1590.7 535.2 L1591.9 534.9 L1593.2 534.7 L1594.4 534.6 L1595.6 534.5 L1596.9 534.5 L1598.1 534.5 L1599.3 534.5 L1600.6 534.6 L1601.8 534.8 L1603.0 535.0 L1604.3 535.2 L1605.5 535.5 L1606.7 535.8 L1608.0 536.2 L1609.2 536.6 L1610.4 537.1 L1611.7 537.6 L1612.9 538.1 L1614.1 538.7 L1615.4 539.3 L1616.6 540.0 L1617.8 540.7 L1619.1 541.4 L1620.3 542.2 L1621.5 543.0 L1622.8 543.8 L1624.0 544.7 L1625.2 545.6 L1626.5 546.6 L1627.7 547.5 L1628.9 548.6 L1630.2 549.6 L1631.4 550.7 L1632.6 551.8 L1633.9 552.9 L1635.1 554.0 L1636.3 555.2 L1637.6 556.4 L1638.8 557.7 L1640.0 558.9 L1641.3 560.2 L1642.5 561.5 L1643.7 562.8 L1645.0 564.1 L1646.2 565.5 L1647.4 566.9 L1648.7 568.3 L1649.9 569.7 L1651.1 571.1 L1652.4 572.5 L1653.6 574.0 L1654.8 575.4"/>
<path d="M1399.1 575.6 L1401.1 577.8 L1403.1 580.1 L1405.1 582.4 L1407.1 584.8 L1409.1 587.1 L1411.0 589.5 L1413.0 592.0 L1415.0 594.4 L1417.0 596.9 L1419.0 599.4 L1421.0 601.9 L1423.0 604.4 L1425.0 607.0 L1427.0 609.5 L1429.0 612.1 L1431.0 614.6 L1433.0 617.2 L1434.9 619.8 L1436.9 622.3 L1438.9 624.9 L1440.9 627.4 L1442.9 629.9 L1444.9 632.5 L1446.9 635.0 L1448.9 637.5 L1450.9 639.9 L1452.9 642.4 L1454.9 644.8 L1456.9 647.2 L1458.8 649.5 L1460.8 651.8 L1462.8 654.1 L1464.8 656.4 L1466.8 658.6 L1468.8 660.8 L1470.8 662.9 L1472.8 665.0 L1474.8 667.0 L1476.8 669.0 L1478.8 671.0 L1480.8 672.8 L1482.7 674.7 L1484.7 676.4 L1486.7 678.2 L1488.7 679.8 L1490.7 681.4 L1492.7 682.9 L1494.7 684.4 L1496.7 685.8 L1498.7 687.1 L1500.7 688.4 L1502.7 689.6 L1504.7 690.7 L1506.6 691.7 L1508.6 692.7 L1510.6 693.6 L1512.6 694.4 L1514.6 695.2 L1516.6 695.8"/>
</g>
</g>
</svg>
<!-- counters on panel -->
<div class="lbl" style="left:1700px;top:598px;font-size:11px;line-height:12px">counter 3</div>
<div class="a" style="left:1700px;top:614px;width:46px;height:18px;background:#b4b4b4;border:2px solid;border-color:#6a6a6a #cfcfcf #cfcfcf #6a6a6a;box-shadow:1px 1px 0 #7a7a7a"></div>
<div class="lbl" style="left:1702px;top:616px;font-size:11px;line-height:13px">1</div>
<div class="lbl" style="left:1688px;top:649px;font-size:11px;line-height:12px">counter 2</div>
<div class="a" style="left:1688px;top:665px;width:46px;height:18px;background:#b4b4b4;border:2px solid;border-color:#6a6a6a #cfcfcf #cfcfcf #6a6a6a;box-shadow:1px 1px 0 #7a7a7a"></div>
<div class="lbl" style="left:1690px;top:667px;font-size:11px;line-height:13px">164</div>
<!-- tools palette -->
<div class="a" style="left:1622px;top:-10px;width:88px;height:95px;border:1px solid #7a8590;border-radius:0 0 3px 3px;background:linear-gradient(90deg,#eef5fb 0%,#f8fbfe 30%,#f4f8fc 100%);box-shadow:0 1px 4px rgba(0,0,0,0.35)"></div>
<div class="a" style="left:1622px;top:12px;width:8px;height:14px;background:radial-gradient(ellipse at center,rgba(120,150,190,0.55) 0%,rgba(120,150,190,0) 70%)"></div>
<div class="a" style="left:1632px;top:76px;width:20px;height:9px;background:radial-gradient(ellipse at center,rgba(120,150,190,0.55) 0%,rgba(120,150,190,0) 70%)"></div>
<div class="a" style="left:1630px;top:-2px;width:72px;height:79px;background:#e8e8e8;border:1px solid #505050;border-top:none"></div>
<svg style="left:1630px;top:0" width="72" height="78">
<g fill="#ececec" stroke="#9a9a9a" stroke-width="0.8"><rect x="1.5" y="-3" width="21" height="19"/><rect x="24.5" y="-3" width="21" height="19"/><rect x="47.5" y="-3" width="21" height="19"/><rect x="1.5" y="18.5" width="21" height="19"/><rect x="24.5" y="18.5" width="21" height="19"/><rect x="47.5" y="18.5" width="21" height="19"/><rect x="1.5" y="40.5" width="67.5" height="34"/></g>
<path d="M1 17H70M1 39H70M24 0V38M47 0V38" stroke="#1a1a1a" stroke-width="1.4"/>
<!-- wiring spool -->
<path d="M8 7.5L12.8 1.5L19 5L14 11.5Z" fill="#c89060"/>
<path d="M10 5.5L15 8.5M11.5 3.5L16.5 6.5M12 9.5L16 3.5M10 7.5L14 1.8" stroke="#6a4a2a" stroke-width="0.7" stroke-dasharray="1 0.8"/>
<path d="M11.5 -0.5L20.5 5.5" stroke="#000" stroke-width="2.4"/>
<path d="M6 6.5L12.8 12.8" stroke="#000" stroke-width="2.4"/>
<path d="M8 1L12 -1" stroke="#000" stroke-width="1.5"/>
<!-- positioning -->
<path d="M28 -1V5.5L29.5 4L31 7L32.3 6.3L30.8 3.5H33Z" fill="#000"/>
<rect x="34.3" y="4.3" width="9" height="9.4" fill="#fff" stroke="#000" stroke-width="1.3"/>
<path d="M35.8 6.6Q37 6 38.5 6.6T41.8 6.6M35.8 9Q37 8.4 38.5 9T41.8 9M35.8 11.4Q37 10.8 38.5 11.4T41.8 11.4" fill="none" stroke="#000" stroke-width="0.8"/>
<!-- hand -->
<path d="M54 14.3L50.5 9.5Q49.5 7.5 51.5 7.8L54 9.5V1.5Q54 0 55.3 0V-1H64.5V3Q65.5 2.5 65.5 4V9Q65 12.5 62.5 14.3Z" fill="#f5c898" stroke="#000" stroke-width="1"/>
<path d="M57 0V6M59.7 -1V6M62.3 0V6" stroke="#000" stroke-width="0.7"/>
<!-- breakpoint -->
<path d="M10.2 22L16.8 22L20.8 26V32.6L16.8 36.6H10.2L6.2 32.6V26Z" fill="#fff" stroke="#000" stroke-width="1"/>
<path d="M10.8 24H16.2L19 26.8V31.8L16.2 34.6H10.8L8 31.8V26.8Z" fill="#c42828"/>
<path d="M10.8 24H16.2L19 26.8V29H8V26.8Z" fill="#e05050" opacity="0.7"/>
<path d="M5 21.3L8.5 24.5M5 21.3V23.5M5 21.3H7.2" stroke="#000" stroke-width="0.9" fill="none"/>
<!-- probe -->
<path d="M28.3 28.4H33M39.8 28.4H44" stroke="#000" stroke-width="1"/>
<path d="M28 28.4L30.3 26.7V30.1Z" fill="#000"/>
<path d="M34.5 24.5H38.5L41 27V30L38.5 32.5H34.5L32 30V27Z" fill="#ffee00" stroke="#000" stroke-width="1"/>
<path d="M35.6 31V26.2H37.6Q38.8 26.4 38.6 27.6Q38.4 28.8 37.2 28.8H35.6" fill="none" stroke="#000" stroke-width="1.1"/>
<!-- color copy dropper -->
<path d="M52.5 34.5L59 28L61.5 30.5L55 37Z" fill="#3050e0" stroke="#000" stroke-width="0.6"/>
<path d="M56.5 30.5L60.5 26.5L63 29L59 33Z" fill="#fff" stroke="#000" stroke-width="0.6"/>
<path d="M59.8 25.2L64.5 29.9M62 24L65.5 20.5Q67.5 20.5 67.3 22.5L63.8 26" stroke="#d0102a" stroke-width="2.4" fill="none"/>
<!-- color boxes -->
<path d="M5 42H24L27 45V52H35L38 55V73H19L16 70V61H8L5 58Z" fill="#000"/>
<!-- brush -->
<g transform="translate(38,44)"><path d="M14 11L24 1L27 4L17 14Z" fill="#c09060" stroke="#604020" stroke-width="0.8"/><path d="M9 16L14 11L17 14L12 19Z" fill="#303030" stroke="#000" stroke-width="0.6"/><path d="M2 23L9 16L12 19Q8 22 2 23Z" fill="#ffee00" stroke="#000" stroke-width="0.9"/></g>
</svg>
<!--END-->
<!--PANEL-->
<!--PALETTE-->
</body></html>
